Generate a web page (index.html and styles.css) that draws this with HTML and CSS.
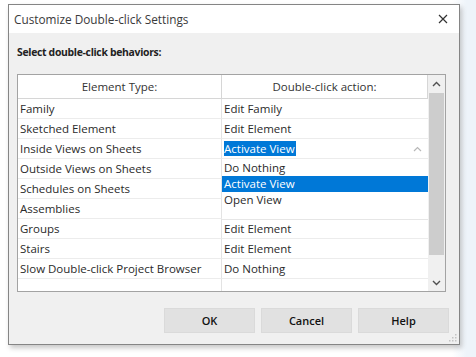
FILE: index.html
```html
<!DOCTYPE html>
<html>

<head>
	<meta charset="UTF-8">
	<title>Customize Double-click Settings</title>
	<link rel="stylesheet" href="styles.css">
</head>

<body>
	<div class="dialog">
		<div class="titlebar">
			<span class="title">Customize Double-click Settings</span>
			<svg class="close" width="10" height="10" viewBox="0 0 10 10">
				<path d="M1 1L9 9M9 1L1 9" stroke="#333" stroke-width="1.2" fill="none" />
			</svg>
		</div>
		<div class="content">
			<p class="prompt">Select double-click behaviors:</p>
			<div class="grid">
				<div class="table">
					<div class="row head">
						<div class="cell">Element Type:</div>
						<div class="cell">Double-click action:</div>
					</div>
					<div class="row">
						<div class="cell">Family</div>
						<div class="cell">Edit Family</div>
					</div>
					<div class="row">
						<div class="cell">Sketched Element</div>
						<div class="cell">Edit Element</div>
					</div>
					<div class="row">
						<div class="cell">Inside Views on Sheets</div>
						<div class="cell combo">
							<span class="sel">Activate View</span>
							<svg class="chev" width="9" height="6" viewBox="0 0 9 6">
								<path d="M1 5L4.5 1.5L8 5" stroke="#b8b8b8" stroke-width="1.2" fill="none" />
							</svg>
						</div>
					</div>
					<!-- action cells below are hidden by the open list -->
					<div class="row">
						<div class="cell">Outside Views on Sheets</div>
						<div class="cell"></div>
					</div>
					<div class="row">
						<div class="cell">Schedules on Sheets</div>
						<div class="cell"></div>
					</div>
					<div class="row">
						<div class="cell">Assemblies</div>
						<div class="cell"></div>
					</div>
					<div class="row">
						<div class="cell">Groups</div>
						<div class="cell">Edit Element</div>
					</div>
					<div class="row">
						<div class="cell">Stairs</div>
						<div class="cell">Edit Element</div>
					</div>
					<div class="row">
						<div class="cell">Slow Double-click Project Browser</div>
						<div class="cell">Do Nothing</div>
					</div>
					<div class="row">
						<div class="cell"></div>
						<div class="cell"></div>
					</div>

					<!-- open list of the combo box -->
					<ul class="droplist">
						<li>Do Nothing</li>
						<li class="on">Activate View</li>
						<li>Open View</li>
					</ul>
				</div>
				<div class="scrollbar">
					<div class="arrow">
						<svg width="9" height="6" viewBox="0 0 9 6">
							<path d="M1 5L4.5 1.5L8 5" stroke="#505050" stroke-width="1.4" fill="none" />
						</svg>
					</div>
					<div class="thumb"></div>
					<div class="track"></div>
					<div class="arrow">
						<svg width="9" height="6" viewBox="0 0 9 6">
							<path d="M1 1L4.5 4.5L8 1" stroke="#505050" stroke-width="1.4" fill="none" />
						</svg>
					</div>
				</div>
			</div>
			<div class="buttons">
				<a href="javascript:;">OK</a>
				<a href="javascript:;">Cancel</a>
				<a href="javascript:;">Help</a>
			</div>
		</div>
		<svg class="grip" width="8" height="8" viewBox="0 0 8 8">
			<rect x="6" y="0" width="1.5" height="1.5" fill="#c4c4c4" />
			<rect x="3" y="3" width="1.5" height="1.5" fill="#c4c4c4" />
			<rect x="6" y="3" width="1.5" height="1.5" fill="#c4c4c4" />
			<rect x="0" y="6" width="1.5" height="1.5" fill="#c4c4c4" />
			<rect x="3" y="6" width="1.5" height="1.5" fill="#c4c4c4" />
			<rect x="6" y="6" width="1.5" height="1.5" fill="#c4c4c4" />
		</svg>
	</div>
</body>

</html>
```

FILE: styles.css
```css
html,
body {
	width: 100%;
	height: 100%;
	margin: 0;
}

body {
	background: linear-gradient(to right, #fff 0, #fff 95%, #eef4fa 98%);
	font-family: "Open Sans", "Noto Sans", sans-serif;
	color: #222;
	overflow: hidden;
}

p,
ul,
li {
	margin: 0;
	padding: 0;
	list-style: none;
}

a {
	text-decoration: none;
	color: #111;
}

.dialog {
	width: 452px;
	height: 341px;
	margin: 4px 0 0 8px;
	box-sizing: border-box;
	border: 1px solid #858585;
	box-shadow: 2px 3px 5px rgba(0, 0, 0, .22);
	display: flex;
	flex-direction: column;
	position: relative;
	background: #f0f0f0;
}

.titlebar {
	height: 28px;
	background: #fff;
	display: flex;
	align-items: center;
	justify-content: space-between;
	padding: 0 11px 0 5px;
}

.title {
	font-size: 11.8px;
	color: #3a3a3a;
}

.content {
	flex: 1;
	display: flex;
	flex-direction: column;
	padding: 11px 11px 0 8px;
}

.prompt {
	font-size: 10.4px;
	font-weight: bold;
	line-height: 16px;
	letter-spacing: -0.3px;
}

.grid {
	margin-top: 14px;
	width: 429px;
	height: 218px;
	box-sizing: border-box;
	border: 1px solid #a3a3a3;
	display: flex;
	background: #fff;
}

.table {
	width: 410px;
	overflow: hidden;
	position: relative;
}

.row {
	display: grid;
	grid-template-columns: 204px 206px;
	height: 20px;
	font-size: 11.5px;
	line-height: 19px;
	color: #2a2a2a;
}

.row .cell {
	border-bottom: 1px solid #ececec;
	padding-left: 2px;
	white-space: nowrap;
}

.row .cell:first-child {
	border-right: 1px solid #e3e3e3;
}

.row.head {
	height: 24px;
	line-height: 23px;
}

.row.head .cell {
	text-align: center;
	border-bottom: 1px solid #d6d6d6;
	color: #333;
	padding-left: 0;
}

.row.head .cell:first-child,
.row.head .cell:last-child {
	border-right: 1px solid #d6d6d6;
}

.combo {
	display: flex;
	align-items: center;
	justify-content: space-between;
	padding-right: 6px;
}

.sel {
	background: #0078d7;
	color: #fff;
	line-height: 15px;
	padding-right: 1px;
}

.droplist {
	position: absolute;
	top: 85px;
	left: 204px;
	width: 206px;
	height: 60px;
	background: #fff;
	border-bottom: 1px solid #e6e6e6;
	box-sizing: border-box;
	font-size: 11.5px;
	color: #2a2a2a;
}

.droplist li {
	height: 16px;
	line-height: 16px;
	padding-left: 2px;
}

.droplist li.on {
	background: #0078d7;
	color: #fff;
}

.scrollbar {
	width: 17px;
	background: #f0f0f0;
	display: flex;
	flex-direction: column;
}

.arrow {
	height: 17px;
	display: flex;
	align-items: center;
	justify-content: center;
}

.thumb {
	height: 162px;
	margin: 1px 1px 0;
	background: #cdcdcd;
}

.track {
	flex: 1;
}

.buttons {
	display: flex;
	justify-content: flex-end;
	gap: 6px;
	margin-top: 16px;
	margin-right: -1px;
}

.buttons a {
	width: 91px;
	height: 25px;
	box-sizing: border-box;
	border: 1px solid #dadada;
	background: #e1e1e1;
	font-size: 11px;
	font-weight: 600;
	line-height: 23px;
	text-align: center;
}

.grip {
	position: absolute;
	right: 2px;
	bottom: 2px;
}
```
